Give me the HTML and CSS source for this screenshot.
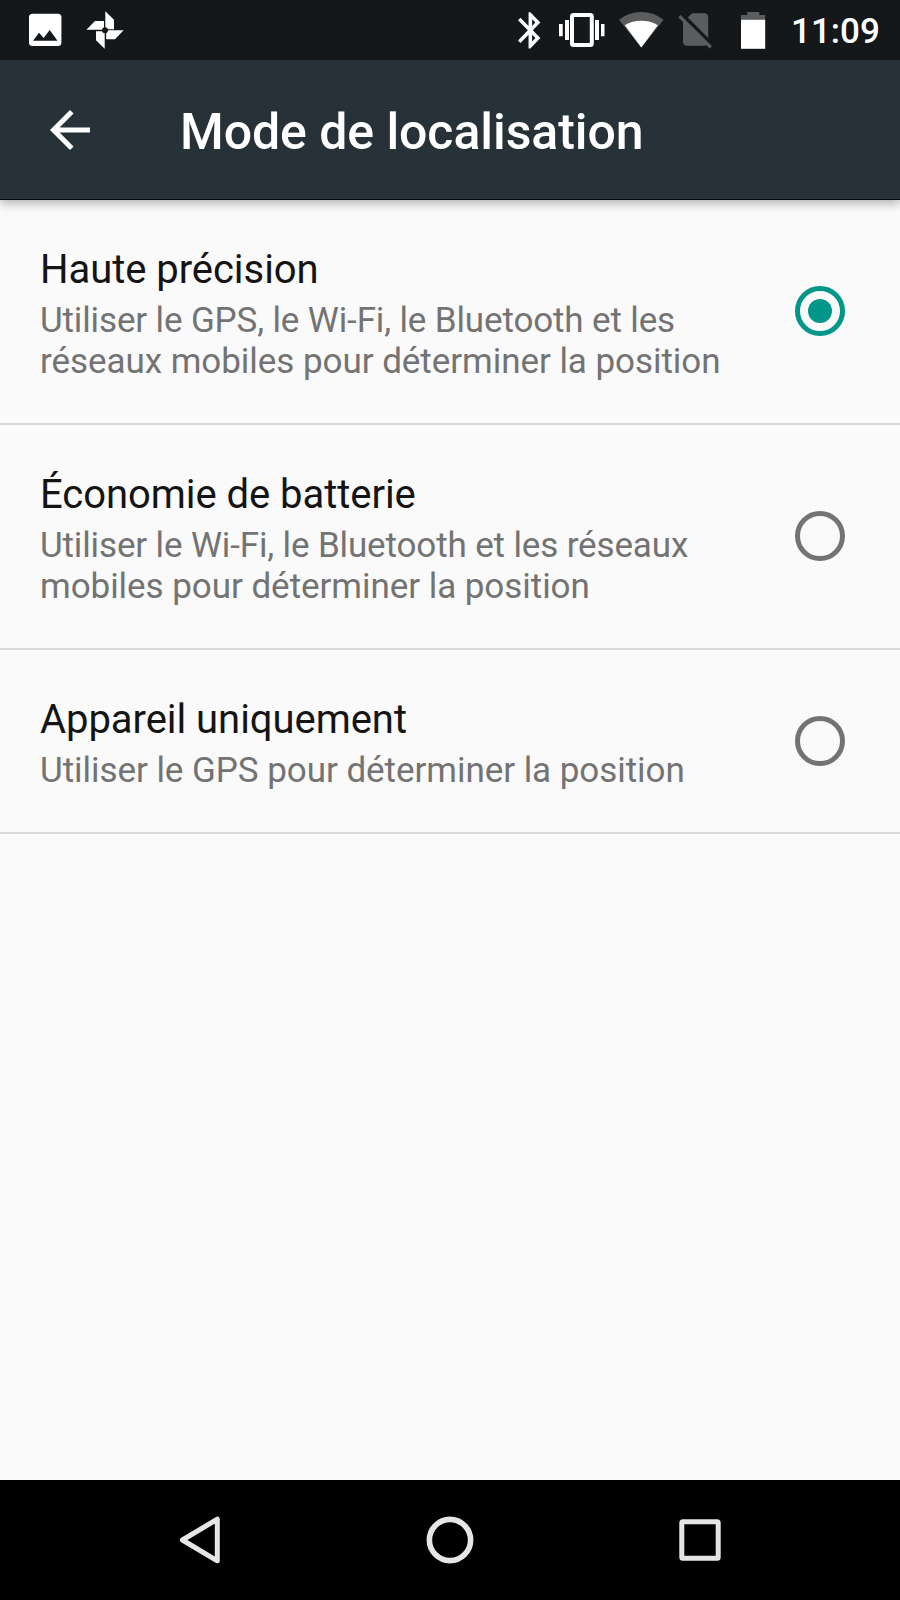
FILE: index.html
```html
<!DOCTYPE html>
<html lang="fr">
<head>
<meta charset="utf-8">
<title>Mode de localisation</title>
<link rel="stylesheet" href="styles.css">
</head>
<body>
<div class="screen">
  <div class="status-bar">
    <svg class="status-left" width="130" height="60" viewBox="0 0 130 60">
      <rect x="29" y="13.7" width="32.4" height="32.4" rx="3.6" fill="#fff"/>
      <path d="M33 40.8L39 32.7L43.7 38L49.7 30L57.5 40.8Z" fill="#14181b"/>
      <g fill="#fff">
        <path d="M105.3 11.2L114 19.7V29.2H105.3Z"/>
        <path d="M86.4 29.8L95 21H104V29.8Z"/>
        <path d="M104.7 48.8L96 40.2V31.2H104.7Z"/>
        <path d="M123.6 30.2L115 39.2H106.2V30.2Z"/>
      </g>
      <circle cx="105" cy="30.2" r="3" fill="#14181b"/>
    </svg>
    <div class="status-right">
      <svg width="270" height="60" viewBox="510 0 270 60">
        <path fill="#fff" transform="translate(509.2 8.6) scale(1.76 1.81)" d="M17.71 7.71L12 2h-1v7.59L6.41 5 5 6.41 10.59 12 5 17.59 6.41 19 11 14.41V22h1l5.71-5.71-4.3-4.29 4.3-4.29zM13 5.83l1.88 1.88L13 9.59V5.83zm1.88 10.46L13 18.17v-3.76l1.88 1.88z"/>
        <rect x="572" y="15" width="19.8" height="30" rx="1.5" fill="none" stroke="#fff" stroke-width="4"/>
        <path fill="#fff" d="M559 24h3.7v12.3H559zM565 20h4v20h-4zM595 20h4v20h-4zM601 24h3.5v12.3H601z"/>
        <path fill="#5b5c5e" d="M641.3 47.6L619 19.8Q628.5 12 641.3 12T663.6 19.8Z"/>
        <path fill="#fff" d="M641.3 47.6L624.8 25.2Q632 20.8 641.3 20.8T657.8 25.2Z"/>
        <path fill="#5b5c5e" transform="translate(674 7.9) scale(1.8)" d="M18.99 5c0-1.1-.89-2-1.99-2h-7L7.66 5.34 19 16.68 18.99 5zM3.65 3.88L2.38 5.15 5 7.77V19c0 1.1.9 2 2 2h10.01c.35 0 .67-.1.96-.26l1.88 1.88 1.27-1.27L3.65 3.88z"/>
        <path fill="#5b5c5e" d="M747.3 12h12v3h5.9v5H741v-5h6.3z"/>
        <path fill="#fff" d="M741 19.8h24.2v29H741z"/>
      </svg>
      <span class="clock">11:09</span>
    </div>
  </div>

  <header class="app-bar">
    <svg class="back" width="60" height="60" viewBox="0 0 24 24"><path fill="#fff" d="M20 11H7.83l5.59-5.59L12 4l-8 8 8 8 1.41-1.41L7.83 13H20v-2z"/></svg>
    <h1 class="title">Mode de localisation</h1>
  </header>

  <main class="options">
    <section class="option">
      <div class="option-text">
        <h2 class="option-title">Haute précision</h2>
        <p class="option-summary"><span class="tight">Utiliser le GPS, le Wi-Fi, le Bluetooth et les</span><br>réseaux mobiles pour déterminer la position</p>
      </div>
      <span class="radio radio-on"></span>
    </section>
    <section class="option">
      <div class="option-text">
        <h2 class="option-title">Économie de batterie</h2>
        <p class="option-summary"><span class="tight">Utiliser le Wi-Fi, le Bluetooth et les réseaux</span><br>mobiles pour déterminer la position</p>
      </div>
      <span class="radio"></span>
    </section>
    <section class="option">
      <div class="option-text">
        <h2 class="option-title">Appareil uniquement</h2>
        <p class="option-summary">Utiliser le GPS pour déterminer la position</p>
      </div>
      <span class="radio"></span>
    </section>
  </main>

  <nav class="nav-bar">
    <svg width="60" height="60" viewBox="0 0 60 60"><path d="M47.3 9.2V50.8L12.4 30Z" fill="none" stroke="#e6e6e6" stroke-width="5" stroke-linejoin="round"/></svg>
    <svg width="60" height="60" viewBox="0 0 60 60"><circle cx="30" cy="30" r="20.6" fill="none" stroke="#e6e6e6" stroke-width="5.6"/></svg>
    <svg width="60" height="60" viewBox="0 0 60 60"><rect x="11.8" y="11.8" width="36.4" height="36.4" rx="1" fill="none" stroke="#e6e6e6" stroke-width="5"/></svg>
  </nav>
</div>
</body>
</html>
```

FILE: styles.css
```css
* {
  box-sizing: border-box;
}

body {
  margin: 0;
  font-family: Roboto, "Noto Sans", sans-serif;
  background: #fafafa;
}

svg {
  display: block;
}

.screen {
  display: flex;
  flex-direction: column;
  width: 900px;
  height: 1600px;
  overflow: hidden;
}

.status-bar {
  display: flex;
  justify-content: space-between;
  flex: none;
  height: 60px;
  background: #14181b;
}

.status-right {
  display: flex;
  align-items: center;
  width: 390px;
}

.clock {
  flex: none;
  margin-left: 11px;
  padding-top: 3px;
  color: #fff;
  font-size: 35px;
  font-weight: 500;
  line-height: 41px;
}

.app-bar {
  display: flex;
  align-items: center;
  flex: none;
  height: 140px;
  padding-left: 40px;
  background: #263238;
  border-bottom: 1px solid #05090b;
  box-shadow: 0 3px 10px rgba(0, 0, 0, 0.32);
}

.title {
  margin: 6px 0 0 80px;
  color: #fff;
  font-size: 50px;
  font-weight: 500;
  line-height: 59px;
  letter-spacing: -0.06px;
}

.options {
  flex: 1;
}

.option {
  display: flex;
  align-items: center;
  justify-content: space-between;
  height: 225px;
  padding: 0 55px 0 40px;
  border-bottom: 2px solid #d9d9d9;
}

.option:last-child {
  height: 184px;
}

.option-text {
  padding-top: 4px;
}

.option-title {
  margin: 0 0 7px;
  color: #141414;
  font-size: 40px;
  font-weight: 400;
  line-height: 47px;
  letter-spacing: -0.05px;
}

.option-summary {
  margin: 0;
  color: #737373;
  font-size: 35px;
  line-height: 41px;
  letter-spacing: -0.05px;
  white-space: nowrap;
}

.tight {
  letter-spacing: -0.14px;
}

.radio {
  display: grid;
  place-items: center;
  flex: none;
  width: 50px;
  height: 50px;
  margin-bottom: 1px;
  border: 5px solid #737373;
  border-radius: 50%;
}

.radio-on {
  border-color: #009688;
}

.radio-on::before {
  content: "";
  width: 24px;
  height: 24px;
  border-radius: 50%;
  background: #009688;
}

.nav-bar {
  display: flex;
  align-items: center;
  justify-content: space-between;
  flex: none;
  height: 120px;
  padding: 0 170px;
  background: #000;
}
```
